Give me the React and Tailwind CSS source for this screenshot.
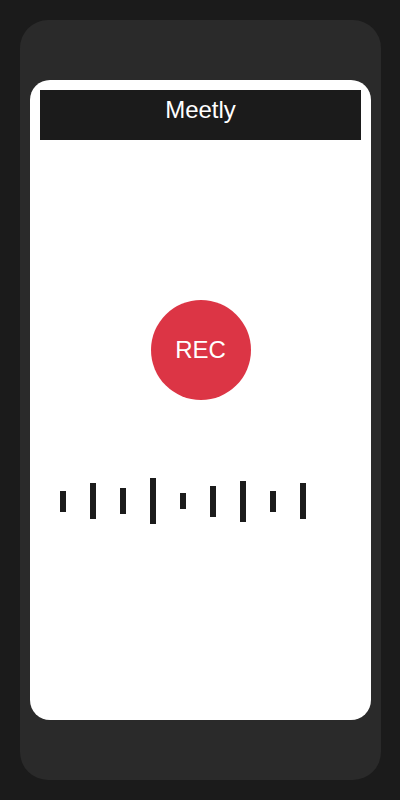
export default function App() {
  const bars = [21, 36, 26, 46, 16, 31, 41, 21, 36]

  return (
    <div className="min-h-screen bg-[#1b1b1b] p-5 font-['Liberation_Sans',Arial,sans-serif]">
      {/* Phone frame */}
      <div className="w-[361px] h-[760px] rounded-[28px] bg-[#2a2a2a] px-[10px] pt-[60px] pb-[60px]">
        {/* Screen */}
        <div className="h-[640px] rounded-[20px] bg-white p-[10px]">
          <header className="h-[50px] bg-[#1b1b1b] text-white text-center text-[24px] leading-[40px]">
            Meetly
          </header>

          <div className="flex justify-center mt-[160px]">
            <button className="w-[100px] h-[100px] rounded-full bg-[#dc3545] text-white text-[24px]">
              REC
            </button>
          </div>

          <div className="flex items-center gap-[24px] pl-[20px] mt-[78px] h-[46px]">
            {bars.map((h, i) => (
              <div key={i} className="w-[6px] bg-[#1b1b1b]" style={{ height: `${h}px` }} />
            ))}
          </div>
        </div>
      </div>
    </div>
  )
}
